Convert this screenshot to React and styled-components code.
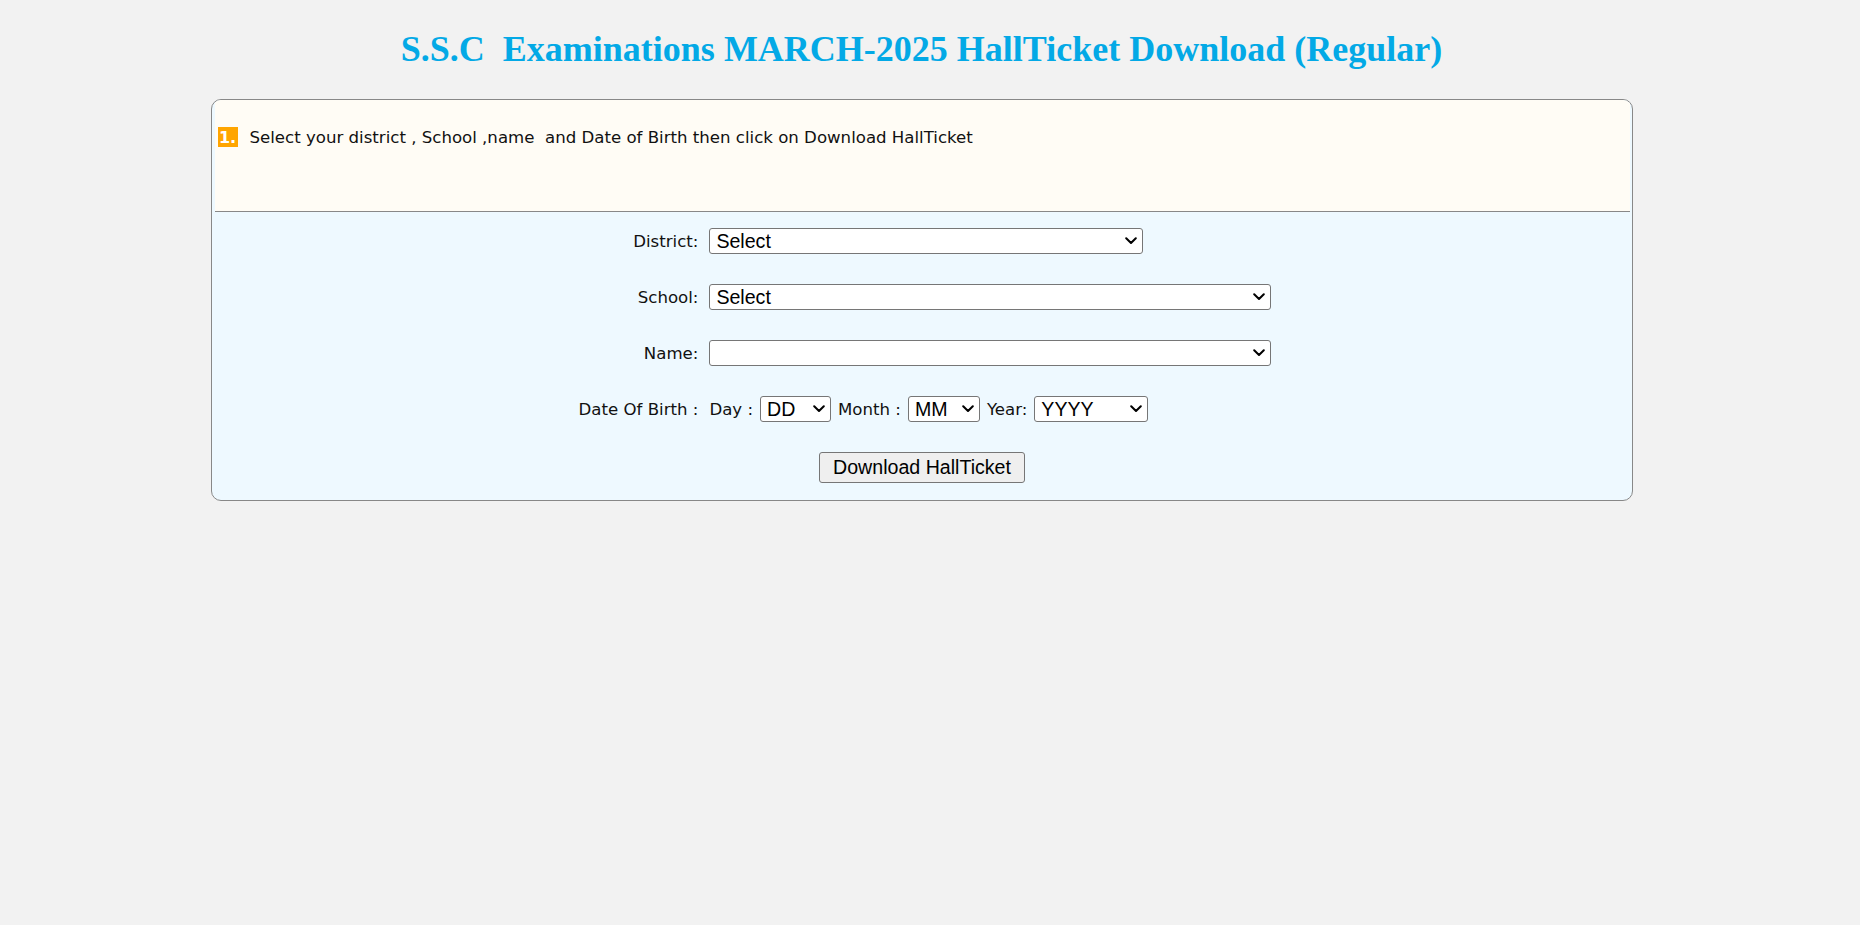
import React from "react";
import styled, { createGlobalStyle } from "styled-components";

const GlobalStyle = createGlobalStyle`
  html, body { margin: 0; padding: 0; background: #f2f2f2; }
  body { font-family: "DejaVu Sans", Tahoma, sans-serif; }
`;

const Page = styled.div`
  width: 1843px;
  padding-top: 28px;
`;

const Title = styled.h1`
  margin: 0;
  text-align: center;
  font-family: "Liberation Serif", "Times New Roman", serif;
  font-weight: bold;
  font-size: 36px;
  line-height: normal;
  color: #03a9e6;
  white-space: pre;
`;

const Panel = styled.div`
  box-sizing: border-box;
  width: 1422px;
  margin: 29px auto 0;
  border: 1px solid #888;
  border-radius: 10px;
  background: #eef9ff;
  padding: 0 2px 0 3px;
  overflow: hidden;
`;

const Header = styled.div`
  box-sizing: border-box;
  height: 112px;
  background: #fffcf5;
  border-bottom: 1px solid #888;
  padding: 27px 0 0 3px;
`;

const Instruction = styled.div`
  display: flex;
  align-items: center;
  gap: 12px;
  font-size: 16.6px;
  color: #111;
  white-space: pre;
`;

const Badge = styled.span`
  display: inline-flex;
  align-items: center;
  justify-content: center;
  width: 20px;
  height: 20px;
  background: #ffa500;
  color: #fff;
  font-weight: bold;
  font-size: 16px;
`;

const FormArea = styled.div`
  padding: 16px 0 17px;
  display: flex;
  flex-direction: column;
  align-items: center;
`;

const FormGrid = styled.div`
  display: grid;
  grid-template-columns: auto auto;
  column-gap: 11px;
  row-gap: 30px;
  align-items: center;
  margin-left: 6px;
`;

const Label = styled.div`
  text-align: right;
  font-size: 16.6px;
  color: #111;
  white-space: pre;
`;

const Field = styled.div`
  display: flex;
  align-items: center;
  gap: 7px;
  font-size: 16.6px;
  color: #111;
  white-space: pre;
`;

const SelectWrap = styled.div`
  position: relative;
  width: ${(p) => p.$w}px;
  height: 26px;
`;

const NativeSelect = styled.select`
  appearance: none;
  -webkit-appearance: none;
  width: 100%;
  height: 100%;
  box-sizing: border-box;
  margin: 0;
  padding: 0 24px 0 6px;
  border: 1px solid #767676;
  border-radius: 3px;
  background: #fff;
  font-family: "Liberation Sans", Arial, sans-serif;
  font-size: 19.6px;
  color: #000;
  outline: none;
`;

const Chevron = styled.svg`
  position: absolute;
  right: 6px;
  top: 9px;
  width: 12px;
  height: 8px;
  pointer-events: none;
`;

const Button = styled.button`
  margin-top: 30px;
  width: 206px;
  height: 31px;
  box-sizing: border-box;
  border: 1px solid #767676;
  border-radius: 3px;
  background: #efefef;
  font-family: "Liberation Sans", Arial, sans-serif;
  font-size: 19.6px;
  color: #000;
  padding: 0;
`;

function Select({ w, options }) {
  return (
    <SelectWrap $w={w}>
      <NativeSelect defaultValue={options[0]}>
        {options.map((o) => (
          <option key={o} value={o}>
            {o}
          </option>
        ))}
      </NativeSelect>
      <Chevron viewBox="0 0 12 8">
        <polyline
          points="1.2,1.2 6,6 10.8,1.2"
          fill="none"
          stroke="#000"
          strokeWidth="2"
          strokeLinecap="round"
          strokeLinejoin="round"
        />
      </Chevron>
    </SelectWrap>
  );
}

export default function App() {
  return (
    <>
      <GlobalStyle />
      <Page>
        <Title>{"S.S.C  Examinations MARCH-2025 HallTicket Download (Regular)"}</Title>
        <Panel>
          <Header>
            <Instruction>
              <Badge>1.</Badge>
              <span>{"Select your district , School ,name  and Date of Birth then click on Download HallTicket"}</span>
            </Instruction>
          </Header>
          <FormArea>
            <FormGrid>
              <Label>District:</Label>
              <Field>
                <Select w={434} options={["Select"]} />
              </Field>
              <Label>School:</Label>
              <Field>
                <Select w={562} options={["Select"]} />
              </Field>
              <Label>Name:</Label>
              <Field>
                <Select w={562} options={[""]} />
              </Field>
              <Label>Date Of Birth :</Label>
              <Field>
                <span>Day :</span>
                <Select w={71} options={["DD"]} />
                <span>Month :</span>
                <Select w={72} options={["MM"]} />
                <span>Year:</span>
                <Select w={114} options={["YYYY"]} />
              </Field>
            </FormGrid>
            <Button type="button">Download HallTicket</Button>
          </FormArea>
        </Panel>
      </Page>
    </>
  );
}
